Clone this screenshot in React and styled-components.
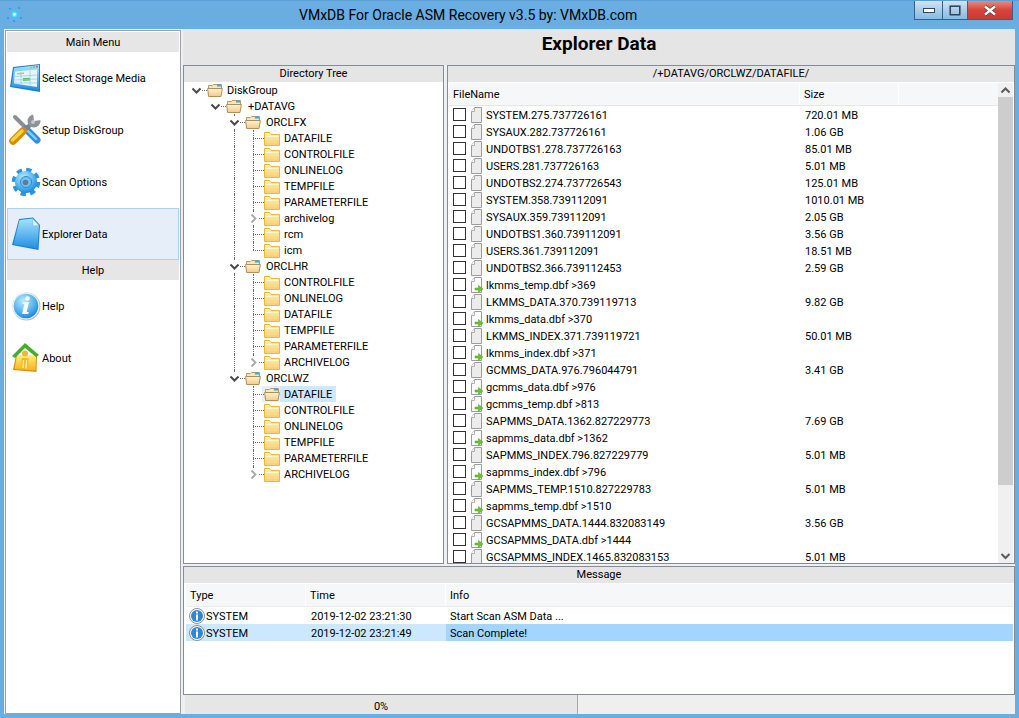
import React from "react";
import styled, { createGlobalStyle } from "styled-components";

const Global = createGlobalStyle`
  html, body { margin: 0; padding: 0; background: #6aaee0; }
  * { box-sizing: border-box; }
`;

const Win = styled.div`
  width: 1019px; height: 718px; overflow: hidden;
  display: flex; flex-direction: column;
  background: #6aade0;
  font: 11px Roboto, sans-serif; color: #000;
  padding: 0 4px 4px;
`;
const TitleBar = styled.div`
  height: 29px; flex: none; display: flex; align-items: flex-start; margin: 0 -4px;
  padding-left: 6px; border-top: 1px solid #5c9fd4;
`;
const AppIconBox = styled.div`width: 17px; height: 17px; margin-top: 5px; flex: none;`;
const TitleText = styled.div`
  margin-left: 276px; font-size: 14px; line-height: 28px; white-space: nowrap; flex: 1;
`;
const WinButtons = styled.div`display: flex; margin-right: 6px; height: 19px; flex: none;`;
const WinBtn = styled.div`
  width: ${p => p.$w}px; height: 19px; display: flex; align-items: center; justify-content: center;
  border: 1px solid #3f5f80; border-top: none; margin-left: -1px;
  background: ${p => p.$close ? "linear-gradient(#e98a83,#d9433d 50%,#c83a36)" : "linear-gradient(#cfe3f3,#a9cdea 50%,#86bbe6)"};
`;
const Body = styled.div`flex: 1; display: flex; background: #efefef; min-height: 0;`;
const Sidebar = styled.aside`
  width: 176px; margin: 1px 0 0 1px; background: #fff; border: 1px solid #96a2b0; padding: 1px;
  display: flex; flex-direction: column; flex: none;
`;
const SectionHead = styled.div`
  height: 20px; padding-top: 2px; background: #e6e6e6; text-align: center; line-height: 18px; flex: none;
`;
const NavItem = styled.div`
  height: 52px; flex: none; display: flex; align-items: center; padding-left: 2px; gap: 1px;
  ${p => p.$active && "background: #e5eef9; border: 1px solid #a9d2f3; padding-left: 1px;"}
`;
const NavIcon = styled.svg`width: 32px; height: 34px; flex: none;`;
const Main = styled.main`
  flex: 1; margin-left: 2px; display: flex; flex-direction: column; min-width: 0;
`;
const PageTitle = styled.h1`
  margin: 0; height: 36px; flex: none; background: #e5e5e5; text-align: center;
  font-size: 19px; font-weight: 700; line-height: 29px;
`;
const Panes = styled.div`height: 499px; display: flex; gap: 3px; flex: none;`;
const Panel = styled.section`
  border: 1px solid #838d99; background: #fff; display: flex; flex-direction: column; min-width: 0; overflow: hidden;
  ${p => p.$w ? `width: ${p.$w}px; flex: none;` : "flex: 1;"}
`;
const PanelTitle = styled.div`
  height: 16px; background: #e5e5e5; line-height: 16px; text-align: center; flex: none;
`;
const TreeBody = styled.div`padding-left: 12px; flex: 1;`;
const TreeRow = styled.div`height: 16px; display: flex; align-items: stretch;`;
const Guide = styled.span`
  width: 19px; flex: none;
  ${p => p.$on && "border-left: 1px dotted #6e6e6e;"}
`;
const Connector = styled.span`
  width: 11px; flex: none; position: relative;
  &::before {
    content: ""; position: absolute; left: 0; top: 0;
    height: ${p => p.$v === "full" ? "16px" : p.$v === "half" ? "8px" : "0"};
    border-left: ${p => p.$v === "none" ? "none" : "1px dotted #6e6e6e"};
  }
  &::after {
    content: ""; position: absolute; left: 0; right: 0; top: 8px; border-top: 1px dotted #6e6e6e;
  }
`;
const Chevron = styled.svg`
  position: absolute; left: -5px; top: 3px; width: 11px; height: 11px; background: #fff; z-index: 1;
`;
const FolderBox = styled.span`
  width: 16px; height: 16px; flex: none; display: flex;
  ${p => p.$sel && "background: #e3f0fc; width: 18px; margin-left: -2px; padding-left: 2px;"}
`;
const Label = styled.span`
  margin-left: ${p => p.$sel ? 0 : p.$gap}px; padding: 2px ${p => p.$sel ? "4px" : "0"} 0; line-height: 14px; white-space: nowrap;
  ${p => p.$sel && "background: #cde8ff;"}
`;
const ListWrap = styled.div`flex: 1; display: flex; min-height: 0; padding-top: 1px;`;
const ListArea = styled.div`flex: 1; min-width: 0; display: flex; flex-direction: column; overflow: hidden; padding-left: 1px;`;
const HeadRow = styled.div`
  height: 23px; flex: none; display: flex; gap: 1px; border-bottom: 1px solid #e6e6e6;
`;
const HeadCell = styled.div`
  background: #f6f7f9; padding-top: 2px; line-height: 20px; padding-left: ${p => p.$pad ?? 4}px;
  ${p => p.$w ? `width: ${p.$w}px; flex: none;` : "flex: 1;"}
`;
const FileRow = styled.div`height: 17px; display: flex; align-items: center; flex: none; padding-left: 4px;`;
const CheckBox = styled.span`
  width: 13px; height: 13px; border: 1px solid #333; background: #fff; flex: none;
`;
const FileIconSvg = styled.svg`width: 13px; height: 16px; margin: 0 3px 0 4px; flex: none;`;
const FileName = styled.span`width: 319px; flex: none; white-space: nowrap; padding-top: 2px;`;
const FileSize = styled.span`white-space: nowrap; padding-top: 2px;`;
const Scroll = styled.div`
  width: 15px; margin-right: 1px; background: #f0f0f0; flex: none; display: flex; flex-direction: column;
`;
const ScrollArrow = styled.svg`width: 15px; height: 14px; flex: none; ${p => p.$bottom && "margin-top: auto;"}`;
const Thumb = styled.div`height: 388px; background: #cdcdcd; flex: none;`;
const Message = styled(Panel)`height: 129px; flex: none; margin-top: 2px;`;
const MsgHead = styled(HeadRow)`margin: 1px 1px 0 2px; border-bottom: 1px solid #ececec;`;
const MsgRow = styled.div`height: 17px; display: flex; flex: none; margin: 0 1px 0 2px;`;
const MsgCell = styled.div`
  ${p => p.$w ? `width: ${p.$w}px; flex: none;` : "flex: 1;"}
  display: flex; align-items: center; padding-left: ${p => p.$pad ?? 0}px;
  background: ${p => p.$bg || "transparent"};
`;
const CellText = styled.span`padding-top: 2px; white-space: nowrap;`;
const InfoSvg = styled.svg`width: 16px; height: 16px; margin-right: 1px; flex: none;`;
const Status = styled.div`height: 19px; flex: none; display: flex; margin: 0 0 0 2px; background: #efefef;`;
const Progress = styled.div`
  width: 393px; background: #e6e6e6; border-right: 1px solid #a8a8a8; text-align: center; padding-top: 2px; line-height: 20px;
`;

const IconDefs = () => (
  <svg width="0" height="0" style={{ position: "absolute" }}>
    <defs>
      <linearGradient id="gBlue" x1="0" y1="0" x2="0" y2="1"><stop offset="0" stopColor="#a5e3fb" /><stop offset="1" stopColor="#2290e4" /></linearGradient>
      <linearGradient id="gFold" x1="0" y1="0" x2="0" y2="1"><stop offset="0" stopColor="#fff1bd" /><stop offset="1" stopColor="#f6cf72" /></linearGradient>
      <linearGradient id="gOpen" x1="0" y1="0" x2="0" y2="1"><stop offset="0" stopColor="#fff2cf" /><stop offset="1" stopColor="#f0cb8b" /></linearGradient>
      <radialGradient id="gBall" cx="0.4" cy="0.3" r="0.8"><stop offset="0" stopColor="#bdeafc" /><stop offset="0.6" stopColor="#4db0ee" /><stop offset="1" stopColor="#1574d0" /></radialGradient>
      <linearGradient id="gHouse" x1="0" y1="0" x2="0" y2="1"><stop offset="0" stopColor="#fff27a" /><stop offset="1" stopColor="#f6b21c" /></linearGradient>
    </defs>
  </svg>
);

const StorageIcon = () => (
  <NavIcon viewBox="0 0 32 34">
    <polygon points="4,6 31,3 31,31 1,26" fill="#1f7fcf" />
    <polygon points="5,7 30,4 30,29 2.5,25" fill="url(#gBlue)" />
    <polygon points="6,10.5 28,8.5 28,26 5,22.5" fill="#e6f6fd" />
    <circle cx="22" cy="6.3" r=".9" fill="#f59b3a" /><circle cx="25" cy="6" r=".9" fill="#4cc35a" /><circle cx="28" cy="5.7" r=".9" fill="#e8473a" />
    <polygon points="8,12 15,11.4 15,13 8,13.6" fill="#f5b04a" />
    <polygon points="14,17 21,16.7 21,19.6 14,20" fill="#5cc26a" />
    <path d="M6 15.5 28 14M5.6 19 28 18M5.3 22 28 22M12 11v11.5M21 9.5V24" stroke="#8cc7ea" strokeWidth=".7" fill="none" />
  </NavIcon>
);
const ToolsIcon = () => (
  <NavIcon viewBox="0 0 32 34">
    <path d="M6 4 20 18" stroke="#8a8f96" strokeWidth="4" strokeLinecap="round" />
    <path d="M17 16 28 27" stroke="#2f8fe0" strokeWidth="7" strokeLinecap="round" />
    <path d="M17.5 16.5 27 26" stroke="#86cdf7" strokeWidth="2.4" strokeLinecap="round" />
    <path d="M14 19 24 9" stroke="#7d838a" strokeWidth="4.5" />
    <circle cx="25" cy="8" r="6.5" fill="#8d9299" />
    <polygon points="25,8 24,0 32,2 32,7" fill="#fff" />
    <circle cx="24" cy="9" r="2" fill="#c3c7cc" />
    <path d="M4 28 14 18" stroke="#d98a0c" strokeWidth="7.5" strokeLinecap="round" />
    <path d="M3.6 27 13 18" stroke="#fbd23c" strokeWidth="3.4" strokeLinecap="round" />
  </NavIcon>
);
const GearIcon = () => (
  <NavIcon viewBox="0 0 32 34">
    <circle cx="17" cy="17" r="12" fill="none" stroke="#2e94e2" strokeWidth="4.5" strokeDasharray="5.2 4.2" />
    <circle cx="17" cy="17" r="11" fill="url(#gBall)" />
    <circle cx="17" cy="17" r="5.5" fill="#6fc4f3" stroke="#2a86d6" strokeWidth="1" />
    <circle cx="16.5" cy="17.5" r="2.8" fill="#5e7c94" />
  </NavIcon>
);
const DocIcon = () => (
  <NavIcon viewBox="0 0 32 34">
    <polygon points="10,2 24,0.5 31,8 29.5,33 3,28" fill="#1e7ed2" />
    <polygon points="10.5,3 23.5,1.5 30,8.5 28.5,31.5 4.5,27.2" fill="url(#gBlue)" />
    <polygon points="23.5,1.5 30,8.5 24,9" fill="#dff5ff" stroke="#5db5ec" strokeWidth=".5" />
  </NavIcon>
);
const HelpIcon = () => (
  <NavIcon viewBox="0 0 32 34">
    <circle cx="17.5" cy="17.5" r="14" fill="#b7bcc2" />
    <circle cx="17" cy="17" r="13.5" fill="#e9f6fd" />
    <circle cx="17" cy="17" r="12.3" fill="url(#gBall)" />
    <circle cx="18.5" cy="9.5" r="2.3" fill="#fff" />
    <polygon points="14,13.5 20,13 17.6,23 20,23 19,25 13,25 15.4,15 13.6,15" fill="#fff" />
  </NavIcon>
);
const HouseIcon = () => (
  <NavIcon viewBox="0 0 32 34">
    <polygon points="7,14 28,14 27.5,31 4,29" fill="#d98f14" />
    <polygon points="8,14 27,14 26.5,29.5 5.5,28" fill="url(#gHouse)" />
    <polygon points="3,15 16,2 30,14 27,16 16,7 6,17" fill="#42ae2e" />
    <circle cx="16" cy="12.5" r="3" fill="#f5b52a" />
    <polygon points="12.5,17 19.5,17 19,28 12,27.5" fill="#f6b72c" />
    <path d="M14.5 19 14 27M17.5 19 17 27.5" stroke="#fff6b4" strokeWidth="1.2" />
  </NavIcon>
);
const AppLogo = () => (
  <svg width="17" height="17" viewBox="0 0 17 17">
    <path d="M2 5 15 4M3 14 14 13M5 2 3 13M12 2 14 12" stroke="#5fb9ee" strokeWidth=".8" fill="none" />
    <circle cx="8.5" cy="8.5" r="3" fill="#3be4ff" /><circle cx="8.5" cy="8.5" r="1.4" fill="#eaffff" />
    {[[4, 3], [13, 2], [2, 12], [15, 12], [8, 15]].map(([x, y]) => <circle key={x} cx={x} cy={y} r="1" fill="#1f9bf0" />)}
  </svg>
);
const ClosedFolder = () => (
  <svg width="16" height="16" viewBox="0 0 16 16">
    <path d="M.5 2.500h5l1.500 2h8.500v11H.5z" fill="url(#gFold)" stroke="#ebb92e" />
    <path d="M1 6.500h14" stroke="#fff6d8" />
  </svg>
);
const OpenFolder = () => (
  <svg width="16" height="16" viewBox="0 0 16 16">
    <path d="M1.500 14V3.500h4l1-1h8V6" fill="#f5e5c0" stroke="#b99a62" />
    <path d="M10 2.500h4v2h-4z" fill="#39a4e6" />
    <path d="M.6 6.500h14.800l-1.400 8H1.600z" fill="url(#gOpen)" stroke="#b0905a" />
  </svg>
);
const Down = () => (
  <Chevron viewBox="0 0 11 11"><path d="M1.500 3.500 5.500 7.500 9.500 3.500" fill="none" stroke="#4a4a4a" strokeWidth="2" /></Chevron>
);
const Right = () => (
  <Chevron viewBox="0 0 11 11"><path d="M3.500 1.500 7.500 5.500 3.500 9.500" fill="none" stroke="#a6a6a6" strokeWidth="1.800" /></Chevron>
);
const FileIcon = ({ link }) => (
  <FileIconSvg viewBox="0 0 13 16">
    <path d="M1.500 4.500 4.500.5h7v15h-10z" fill={link ? "#fbfbfb" : "#ececec"} stroke="#9c9c9c" />
    <path d="M4.500.5v4h-3" fill="#fff" stroke="#b0b0b0" />
    {link && <path d="M5 11h3.500V8.500L13 12l-4.500 3.500V13H5z" fill="#6cc22e" stroke="#4aa523" strokeWidth=".5" />}
  </FileIconSvg>
);
const InfoIcon = () => (
  <InfoSvg viewBox="0 0 16 16">
    <circle cx="8" cy="8" r="7.500" fill="#fff" stroke="#8f8f8f" />
    <circle cx="8" cy="8" r="6" fill="#2f86d8" />
    <rect x="7" y="3.500" width="2" height="2" fill="#fff" />
    <rect x="7" y="6.500" width="2" height="6" fill="#fff" />
  </InfoSvg>
);

const children = (names, parentGuide, archiveIdx) =>
  names.map((n, i) => ({
    d: 3, label: n, kind: "closed", gap: 4,
    guides: [false, false, parentGuide],
    v: i === names.length - 1 ? "half" : "full",
    tog: i === archiveIdx ? "right" : null,
  }));

const tree = [
  { d: 0, label: "DiskGroup", kind: "open", gap: 4, guides: [], v: "none", tog: "down" },
  { d: 1, label: "+DATAVG", kind: "open", gap: 6, guides: [false], v: "none", tog: "down" },
  { d: 2, label: "ORCLFX", kind: "open", gap: 5, guides: [false, false], v: "full", tog: "down" },
  ...children(["DATAFILE", "CONTROLFILE", "ONLINELOG", "TEMPFILE", "PARAMETERFILE", "archivelog", "rcm", "icm"], true, 5),
  { d: 2, label: "ORCLHR", kind: "open", gap: 5, guides: [false, false], v: "full", tog: "down" },
  ...children(["CONTROLFILE", "ONLINELOG", "DATAFILE", "TEMPFILE", "PARAMETERFILE", "ARCHIVELOG"], true, 5),
  { d: 2, label: "ORCLWZ", kind: "open", gap: 5, guides: [false, false], v: "half", tog: "down" },
  ...children(["DATAFILE", "CONTROLFILE", "ONLINELOG", "TEMPFILE", "PARAMETERFILE", "ARCHIVELOG"], false, 5).map((r, i) =>
    i === 0 ? { ...r, kind: "open", sel: true } : r),
];

const files = [
  ["SYSTEM.275.737726161", "720.01 MB"], ["SYSAUX.282.737726161", "1.06 GB"], ["UNDOTBS1.278.737726163", "85.01 MB"],
  ["USERS.281.737726163", "5.01 MB"], ["UNDOTBS2.274.737726543", "125.01 MB"], ["SYSTEM.358.739112091", "1010.01 MB"],
  ["SYSAUX.359.739112091", "2.05 GB"], ["UNDOTBS1.360.739112091", "3.56 GB"], ["USERS.361.739112091", "18.51 MB"],
  ["UNDOTBS2.366.739112453", "2.59 GB"], ["lkmms_temp.dbf >369"], ["LKMMS_DATA.370.739119713", "9.82 GB"],
  ["lkmms_data.dbf >370"], ["LKMMS_INDEX.371.739119721", "50.01 MB"], ["lkmms_index.dbf >371"],
  ["GCMMS_DATA.976.796044791", "3.41 GB"], ["gcmms_data.dbf >976"], ["gcmms_temp.dbf >813"],
  ["SAPMMS_DATA.1362.827229773", "7.69 GB"], ["sapmms_data.dbf >1362"], ["SAPMMS_INDEX.796.827229779", "5.01 MB"],
  ["sapmms_index.dbf >796"], ["SAPMMS_TEMP.1510.827229783", "5.01 MB"], ["sapmms_temp.dbf >1510"],
  ["GCSAPMMS_DATA.1444.832083149", "3.56 GB"], ["GCSAPMMS_DATA.dbf >1444"], ["GCSAPMMS_INDEX.1465.832083153", "5.01 MB"],
];

export default function App() {
  return (
    <Win>
      <Global />
      <IconDefs />
      <TitleBar>
        <AppIconBox><AppLogo /></AppIconBox>
        <TitleText>VMxDB For Oracle ASM Recovery v3.5 by: VMxDB.com</TitleText>
        <WinButtons>
          <WinBtn $w={29}><svg width="12" height="5"><rect x=".5" y=".5" width="11" height="4" fill="#fff" stroke="#33475c" /></svg></WinBtn>
          <WinBtn $w={26}><svg width="12" height="11"><rect x="1" y="1" width="10" height="9" fill="none" stroke="#33475c" strokeWidth="2" /><rect x="0" y="0" width="12" height="11" fill="none" stroke="#fff" strokeWidth=".6" /></svg></WinBtn>
          <WinBtn $w={46} $close><svg width="14" height="11" viewBox="0 0 14 11"><path d="M2 1.500 12 9.500M12 1.500 2 9.500" stroke="#4a2a2a" strokeWidth="3.600" /><path d="M2 1.500 12 9.500M12 1.500 2 9.500" stroke="#fff" strokeWidth="2.600" /></svg></WinBtn>
        </WinButtons>
      </TitleBar>
      <Body>
        <Sidebar>
          <SectionHead>Main Menu</SectionHead>
          <NavItem><StorageIcon />Select Storage Media</NavItem>
          <NavItem><ToolsIcon />Setup DiskGroup</NavItem>
          <NavItem><GearIcon />Scan Options</NavItem>
          <NavItem $active><DocIcon />Explorer Data</NavItem>
          <SectionHead>Help</SectionHead>
          <NavItem><HelpIcon />Help</NavItem>
          <NavItem><HouseIcon />About</NavItem>
        </Sidebar>
        <Main>
          <PageTitle>Explorer Data</PageTitle>
          <Panes>
            <Panel $w={261}>
              <PanelTitle>Directory Tree</PanelTitle>
              <TreeBody>
                {tree.map((r, i) => (
                  <TreeRow key={i}>
                    {r.guides.map((g, k) => <Guide key={k} $on={g} />)}
                    <Connector $v={r.v}>
                      {r.tog === "down" && <Down />}
                      {r.tog === "right" && <Right />}
                    </Connector>
                    <FolderBox $sel={r.sel}>{r.kind === "open" ? <OpenFolder /> : <ClosedFolder />}</FolderBox>
                    <Label $sel={r.sel} $gap={r.gap}>{r.label}</Label>
                  </TreeRow>
                ))}
              </TreeBody>
            </Panel>
            <Panel>
              <PanelTitle>/+DATAVG/ORCLWZ/DATAFILE/</PanelTitle>
              <ListWrap>
                <ListArea>
                  <HeadRow>
                    <HeadCell $w={350}>FileName</HeadCell>
                    <HeadCell $w={98}>Size</HeadCell>
                    <HeadCell />
                  </HeadRow>
                  {files.map(([n, s]) => (
                    <FileRow key={n}>
                      <CheckBox />
                      <FileIcon link={!s} />
                      <FileName>{n}</FileName>
                      <FileSize>{s}</FileSize>
                    </FileRow>
                  ))}
                </ListArea>
                <Scroll>
                  <ScrollArrow viewBox="0 0 15 14"><path d="M3.500 9.500 7.500 5.500 11.500 9.500" fill="none" stroke="#5a5a5a" strokeWidth="2" /></ScrollArrow>
                  <Thumb />
                  <ScrollArrow $bottom viewBox="0 0 15 14"><path d="M3.500 5 7.500 9 11.500 5" fill="none" stroke="#5a5a5a" strokeWidth="2" /></ScrollArrow>
                </Scroll>
              </ListWrap>
            </Panel>
          </Panes>
          <Message>
            <PanelTitle>Message</PanelTitle>
            <MsgHead>
              <HeadCell $w={119}>Type</HeadCell>
              <HeadCell $w={139}>Time</HeadCell>
              <HeadCell>Info</HeadCell>
            </MsgHead>
            <MsgRow>
              <MsgCell $w={120} $pad={3}><InfoIcon /><CellText>SYSTEM</CellText></MsgCell>
              <MsgCell $w={140} $pad={5}><CellText>2019-12-02 23:21:30</CellText></MsgCell>
              <MsgCell $pad={4}><CellText>Start Scan ASM Data ...</CellText></MsgCell>
            </MsgRow>
            <MsgRow>
              <MsgCell $w={120} $pad={3} $bg="#cce8ff"><InfoIcon /><CellText>SYSTEM</CellText></MsgCell>
              <MsgCell $w={140} $pad={5} $bg="#cce8ff"><CellText>2019-12-02 23:21:49</CellText></MsgCell>
              <MsgCell $pad={4} $bg="#a3d5ff"><CellText>Scan Complete!</CellText></MsgCell>
            </MsgRow>
          </Message>
          <Status><Progress>0%</Progress></Status>
        </Main>
      </Body>
    </Win>
  );
}
